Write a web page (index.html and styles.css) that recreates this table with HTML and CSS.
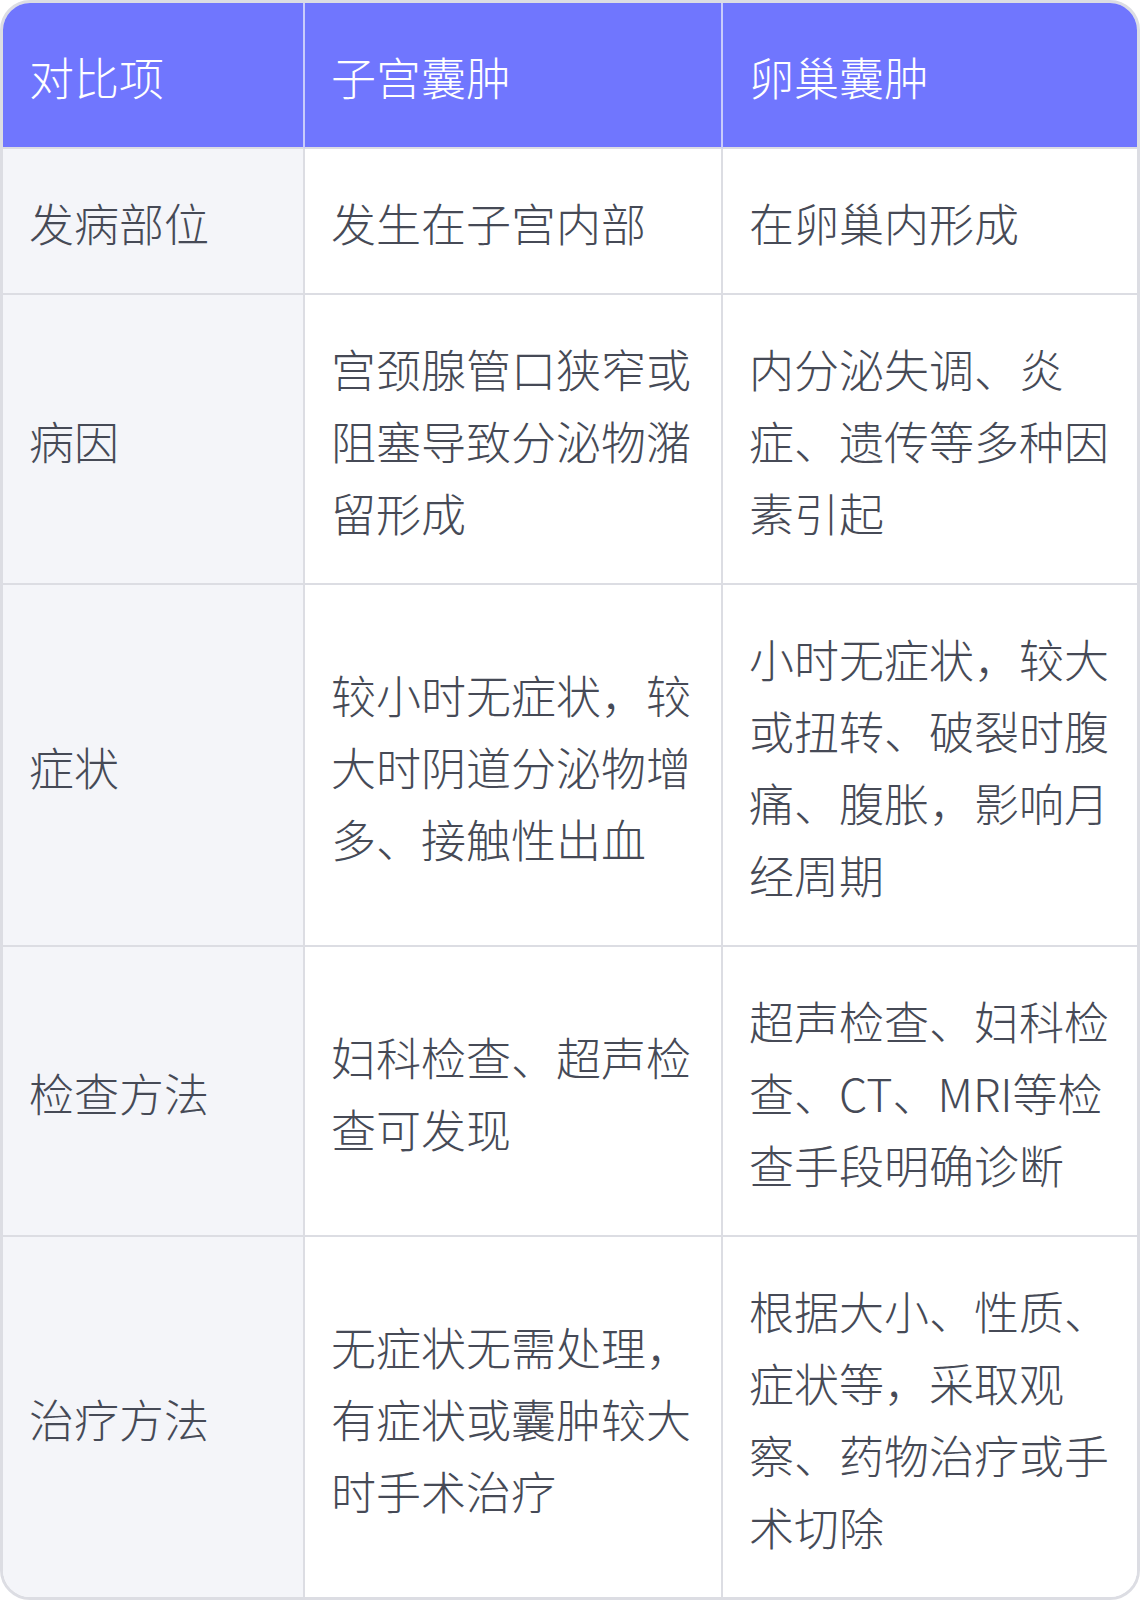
FILE: index.html
```html
<!DOCTYPE html>
<html lang="zh-CN">
<head>
<meta charset="utf-8">
<link rel="stylesheet" href="styles.css">
</head>
<body>
<div class="card">
  <table class="cmp">
    <colgroup>
      <col class="c1">
      <col class="c2">
      <col class="c3">
    </colgroup>
    <thead>
      <tr>
        <th>对比项</th>
        <th>子宫囊肿</th>
        <th>卵巢囊肿</th>
      </tr>
    </thead>
    <tbody>
      <tr>
        <td class="label">发病部位</td>
        <td>发生在子宫内部</td>
        <td>在卵巢内形成</td>
      </tr>
      <tr>
        <td class="label">病因</td>
        <td>宫颈腺管口狭窄或阻塞导致分泌物潴留形成</td>
        <td>内分泌失调、炎症、遗传等多种因素引起</td>
      </tr>
      <tr>
        <td class="label">症状</td>
        <td>较小时无症状，较大时阴道分泌物增多、接触性出血</td>
        <td>小时无症状，较大或扭转、破裂时腹痛、腹胀，影响月经周期</td>
      </tr>
      <tr>
        <td class="label">检查方法</td>
        <td>妇科检查、超声检查可发现</td>
        <td>超声检查、妇科检查、CT、MRI等检查手段明确诊断</td>
      </tr>
      <tr>
        <td class="label">治疗方法</td>
        <td>无症状无需处理，有症状或囊肿较大时手术治疗</td>
        <td>根据大小、性质、症状等，采取观察、药物治疗或手术切除</td>
      </tr>
    </tbody>
  </table>
</div>
</body>
</html>
```
FILE: styles.css
```css
html, body {
  margin: 0;
  padding: 0;
  background: #ffffff;
}

.card {
  width: 1140px;
  height: 1600px;
  box-sizing: border-box;
  border: 3px solid #dcdde3;
  border-radius: 30px;
  overflow: hidden;
  background: #ffffff;
}

.cmp {
  width: 1134px;
  table-layout: fixed;
  border-collapse: separate;
  border-spacing: 0;
  font-family: "Noto Sans CJK SC", "Noto Sans", sans-serif;
  font-size: 45px;
  font-weight: 300;
  line-height: 72px;
}

.c1 { width: 302px; }
.c2 { width: 418px; }
.c3 { width: 414px; }

.cmp th,
.cmp td {
  padding: 38px 20px 34px 26px;
  text-align: left;
  vertical-align: middle;
  border-right: 2px solid #dcdde3;
  border-bottom: 2px solid #dcdde3;
  word-break: break-all;
}

.cmp th:last-child,
.cmp td:last-child {
  border-right: none;
}

.cmp tbody tr:last-child td {
  border-bottom: none;
}

.cmp th {
  background: #7076fe;
  color: #ffffff;
  font-weight: 300;
  border-right-color: #c9cbfb;
}

.cmp td {
  color: #464a56;
  background: #ffffff;
}

.cmp td.label {
  background: #f4f5f9;
}
```
